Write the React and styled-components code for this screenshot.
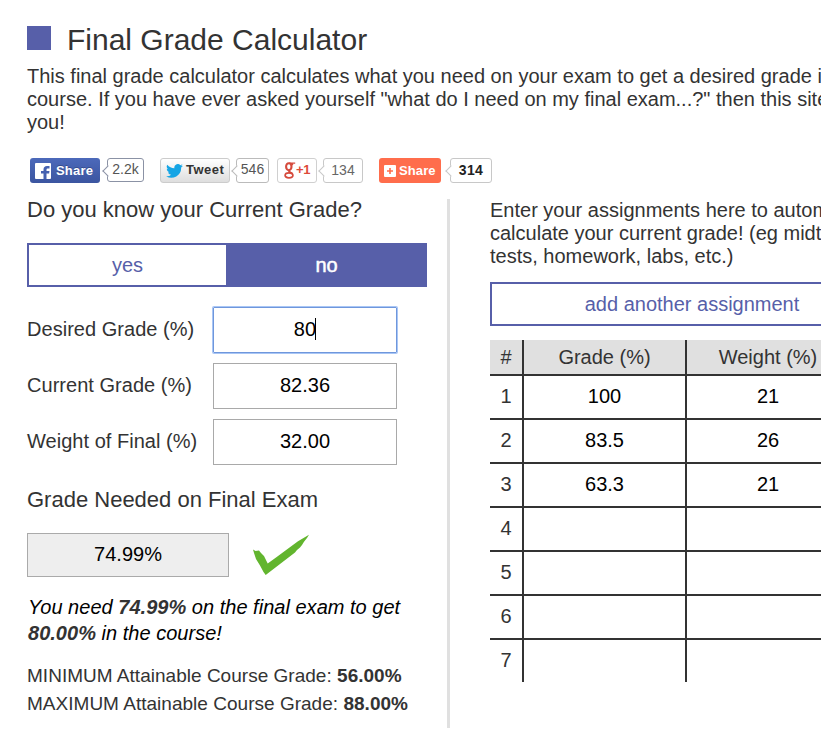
import React from "react";
import styled, { createGlobalStyle, css } from "styled-components";

const Global = createGlobalStyle`
  * { box-sizing: border-box; }
  body {
    margin: 0;
    background: #fff;
    color: #333;
    font: 20px/23px "Liberation Sans", Arial, sans-serif;
    overflow: hidden;
  }
`;

const Page = styled.main`
  height: 735px;
  overflow: hidden;
  padding: 23px 0 0 27px;
`;
const Inner = styled.div`
  width: 870px;
`;
const TitleRow = styled.header`
  display: flex;
  gap: 16px;
  height: 42px;
  padding-top: 3px;
`;
const Square = styled.span`
  width: 24px;
  height: 24px;
  background: #575fa9;
`;
const Title = styled.h1`
  margin: -3px 0 0;
  font-size: 30px;
  line-height: 34px;
  font-weight: 400;
`;
const Intro = styled.p`
  margin: 0 0 24px;
  height: 69px;
  white-space: pre-line;
`;
const Social = styled.div`
  display: flex;
  height: 25px;
  padding-left: 3px;
`;
const ShareGroup = styled.div`
  display: flex;
  gap: ${(p) => p.$gap}px;
  margin-right: ${(p) => p.$after}px;
`;
const kinds = {
  facebook: css`
    width: 70px;
    gap: 4px;
    padding-left: 4px;
    color: #fff;
    background: linear-gradient(#4c69ba, #3b55a0);
    font-size: 13px;
    letter-spacing: 0.2px;
    text-shadow: 0 -1px 0 #354c8c;
  `,
  twitter: css`
    width: 70px;
    gap: 3px;
    padding: 0 0 2px 5px;
    color: #333;
    border: 1px solid #ccc;
    background: linear-gradient(#fff, #dedede);
    font-size: 13px;
    letter-spacing: 0.5px;
    svg { margin-top: 3px; }
  `,
  google: css`
    width: 40px;
    gap: 0;
    padding: 0 0 2px 6px;
    color: #dd4b39;
    border: 1px solid #d0d0d0;
    background: #fff;
    font-size: 13px;
    letter-spacing: -0.4px;
    svg { margin-top: 2px; }
  `,
  addthis: css`
    width: 62px;
    gap: 3px;
    padding-left: 5px;
    color: #fff;
    background: #ff6d4c;
    font-size: 13px;
    letter-spacing: 0.1px;
  `,
};
const ShareButton = styled.button`
  display: flex;
  align-items: center;
  height: 25px;
  padding: 0;
  border: 0;
  border-radius: 3px;
  font-family: inherit;
  font-weight: 700;
  white-space: nowrap;
  ${(p) => kinds[p.$kind]}
`;
const Count = styled.span`
  position: relative;
  width: ${(p) => p.$width}px;
  height: ${(p) => p.$height || 25}px;
  border: 1px solid ${(p) => p.$line || "#c8c8c8"};
  border-radius: 3px;
  background: #fff;
  color: ${(p) => p.$ink || "#555"};
  font-size: 14px;
  line-height: ${(p) => p.$leading || 23}px;
  font-weight: ${(p) => (p.$strong ? 700 : 400)};
  letter-spacing: ${(p) => p.$track || 0}px;
  text-align: center;
  &::before {
    content: "";
    position: absolute;
    left: -4px;
    top: 8px;
    width: 7px;
    height: 7px;
    border: solid ${(p) => p.$line || "#c8c8c8"};
    border-width: 0 0 1px 1px;
    background: #fff;
    transform: rotate(45deg);
  }
`;
const Columns = styled.div`
  display: grid;
  grid-template-columns: 400px 3px 404px;
  column-gap: 20px;
  padding-top: 14px;
`;
const Left = styled.section`
  display: flex;
  flex-direction: column;
`;
const Right = styled.section`
  margin-left: 20px;
  width: 404px;
  padding-top: 2px;
`;
const Divider = styled.div`
  height: 529px;
  margin-top: 2px;
  background: #e0e0e0;
`;
const Question = styled.h2`
  margin: 0 0 21px;
  font-size: 22px;
  line-height: 25px;
  font-weight: 400;
`;
const Toggle = styled.div`
  display: grid;
  grid-template-columns: 197px 1fr;
  height: 44px;
  margin-bottom: 20px;
  border: 2px solid #575fa9;
`;
const Option = styled.button`
  border: 0;
  padding: 1px 0 0 ${(p) => (p.$on ? 2 : 0)}px;
  font: inherit;
  -webkit-text-stroke: ${(p) => (p.$on ? "0.5px #fff" : "0")};
  color: ${(p) => (p.$on ? "#fff" : "#575fa9")};
  background: ${(p) => (p.$on ? "#575fa9" : "#fff")};
`;
const Fields = styled.div`
  display: grid;
  row-gap: 10px;
  margin-bottom: 22px;
`;
const Field = styled.div`
  display: grid;
  grid-template-columns: 186px 184px;
  height: 46px;
  line-height: 45px;
  letter-spacing: 0.03px;
`;
const Value = styled.div`
  display: flex;
  align-items: center;
  justify-content: center;
  height: 46px;
  padding-bottom: 2px;
  line-height: 24px;
  color: #000;
  border: 1px solid ${(p) => (p.$focused ? "#6f97dc" : "#a9a9a9")};
  box-shadow: ${(p) => (p.$focused ? "0 0 0 1px #a9c6f5" : "none")};
  border-radius: ${(p) => (p.$focused ? 1 : 0)}px;
`;
const Caret = styled.i`
  width: 1px;
  height: 22px;
  margin: 0 0 0 -1px;
  background: #000;
`;
const ResultRow = styled.div`
  display: flex;
  gap: 23px;
  height: 44px;
`;
const Result = styled.output`
  width: 202px;
  border: 1px solid #aaa;
  background: #eee;
  color: #000;
  line-height: 40px;
  text-align: center;
`;
const Message = styled.p`
  margin: 17px 0 16px 1px;
  color: #000;
  font-style: italic;
  line-height: 26px;
  white-space: pre-line;
  letter-spacing: 0.02px;
  strong { color: #333; }
`;
const Bounds = styled.p`
  margin: 0;
  font-size: 19px;
  line-height: 28px;
  letter-spacing: 0.02px;
`;
const Help = styled.p`
  margin: 0 0 14px;
  white-space: pre-line;
`;
const AddButton = styled.button`
  display: block;
  width: 404px;
  height: 44px;
  padding: 1px 0 0;
  border: 2px solid #575fa9;
  background: #fff;
  color: #575fa9;
  font: inherit;
  margin-bottom: 14px;
`;
const Table = styled.div`
  width: 404px;
`;
const Row = styled.div`
  display: grid;
  grid-template-columns: 34px 163px 1fr;
  height: ${(p) => (p.$head ? 36 : 44)}px;
  line-height: ${(p) => (p.$head ? 34 : 40)}px;
  background: ${(p) => (p.$head ? "#e0e0e0" : "#fff")};
  border-bottom: 2px solid #333;
  text-align: center;
  &:last-child { height: 42px; border-bottom: 0; }
`;
const Cell = styled.div`
  position: relative;
  color: ${(p) => (p.$entry ? "#000" : "#333")};
  border-right: 2px solid #333;
  margin-bottom: -2px;
  &:last-child { border-right: 0; width: 162px; }
  ${Row}:last-child & { margin-bottom: 0; }
`;

const fields = [
  ["Desired Grade (%)", "80", true],
  ["Current Grade (%)", "82.36"],
  ["Weight of Final (%)", "32.00"],
];
const rows = [
  ["100", "21"],
  ["83.5", "26"],
  ["63.3", "21"],
  ["", ""],
  ["", ""],
  ["", ""],
  ["", ""],
];

const FacebookIcon = () => (
  <svg width="18" height="18" viewBox="0 0 18 18">
    <rect x="1" y="1" width="16" height="16" rx="1" fill="#fff" />
    <path d="M9.500 17v-5.500H7V9h2.500V7.500C9.500 5.200 10.800 4 13 4h2.500v2.500H14c-1 0-1.500.4-1.500 1.300V9h3l-.4 2.500h-2.600V17z" fill="#4561b0" />
  </svg>
);
const TwitterIcon = () => (
  <svg width="17" height="14" viewBox="0 0 24 20">
    <path fill="#16a5e5" d="M24 2.400c-.9.400-1.800.7-2.800.8 1-.6 1.800-1.600 2.200-2.700-1 .6-2 1-3.100 1.200A4.920 4.920 0 0 0 11.900 6.200C7.800 6 4.200 4 1.700 1a4.900 4.900 0 0 0 1.500 6.500c-.8 0-1.600-.2-2.200-.6 0 2.400 1.600 4.400 3.900 4.900-.7.200-1.500.2-2.200.1.600 2 2.400 3.400 4.600 3.400A9.900 9.900 0 0 1 0 17.400 14 14 0 0 0 21.500 4.900c1-.7 1.800-1.600 2.500-2.500z" />
  </svg>
);
const GoogleIcon = () => (
  <svg width="12" height="19" viewBox="0 0 12 19" fill="none" stroke="#d54a3c">
    <ellipse cx="4.800" cy="5.700" rx="2.700" ry="3.500" strokeWidth="2.100" />
    <path d="M5 2.200h6.200M7.500 2.500L9 4" strokeWidth="1.300" />
    <path d="M6 9.300C3.800 10.800 6 11.300 8.200 12.600" strokeWidth="2" />
    <ellipse cx="5" cy="14.300" rx="3.900" ry="2.500" strokeWidth="1.700" />
  </svg>
);
const PlusIcon = () => (
  <svg width="12" height="12" viewBox="0 0 12 12">
    <rect width="12" height="12" rx="1" fill="#fff" />
    <path d="M6 3v6M3 6h6" stroke="#ff6d4c" strokeWidth="1.600" />
  </svg>
);
const CheckIcon = () => (
  <svg width="58" height="44" viewBox="0 0 58 44">
    <path d="M1 16.500L3.500 18L7 17.500L9 20L12 23L15.700 30.500L24 24.500L46 8.200L57 1.800L55 5L52 8.700L50 12L48 14.500L45 17L43 19.500L15 41L13.700 42L11.500 39L8 32.500L4 26L2 20z" fill="#62b52e" />
  </svg>
);

export default function App() {
  return (
    <Page>
      <Global />
      <Inner>
        <TitleRow>
          <Square />
          <Title>Final Grade Calculator</Title>
        </TitleRow>
        <Intro>
          {'This final grade calculator calculates what you need on your exam to get a desired grade in the\ncourse. If you have ever asked yourself "what do I need on my final exam...?" then this site is for\nyou!'}
        </Intro>
        <Social>
          <ShareGroup $gap={7} $after={16}>
            <ShareButton $kind="facebook"><FacebookIcon />Share</ShareButton>
            <Count $width={37} $height={24} $leading={21} $line="#8b92a5">2.2k</Count>
          </ShareGroup>
          <ShareGroup $gap={6} $after={8}>
            <ShareButton $kind="twitter"><TwitterIcon />Tweet</ShareButton>
            <Count $width={33} $leading={21} $line="#bbb">546</Count>
          </ShareGroup>
          <ShareGroup $gap={6} $after={16}>
            <ShareButton $kind="google"><GoogleIcon />+1</ShareButton>
            <Count $width={40} $ink="#666">134</Count>
          </ShareGroup>
          <ShareGroup $gap={9} $after={0}>
            <ShareButton $kind="addthis"><PlusIcon />Share</ShareButton>
            <Count $width={42} $strong $ink="#222" $track={0.3}>314</Count>
          </ShareGroup>
        </Social>
        <Columns>
          <Left>
            <Question>Do you know your Current Grade?</Question>
            <Toggle>
              <Option>yes</Option>
              <Option $on>no</Option>
            </Toggle>
            <Fields>
              {fields.map(([label, value, focused]) => (
                <Field key={label}>
                  <span>{label}</span>
                  <Value $focused={focused}>{value}{focused && <Caret />}</Value>
                </Field>
              ))}
            </Fields>
            <Question>Grade Needed on Final Exam</Question>
            <ResultRow>
              <Result>74.99%</Result>
              <CheckIcon />
            </ResultRow>
            <Message>
              You need <strong>74.99%</strong> on the final exam to get{"\n"}
              <strong>80.00%</strong> in the course!
            </Message>
            <Bounds>MINIMUM Attainable Course Grade: <strong>56.00%</strong></Bounds>
            <Bounds>MAXIMUM Attainable Course Grade: <strong>88.00%</strong></Bounds>
          </Left>
          <Divider />
          <Right>
            <Help>{"Enter your assignments here to automatically\ncalculate your current grade! (eg midterms,\ntests, homework, labs, etc.)"}</Help>
            <AddButton>add another assignment</AddButton>
            <Table>
              <Row $head>
                <Cell>#</Cell>
                <Cell>Grade (%)</Cell>
                <Cell>Weight (%)</Cell>
              </Row>
              {rows.map(([grade, weight], i) => (
                <Row key={i}>
                  <Cell>{i + 1}</Cell>
                  <Cell $entry>{grade}</Cell>
                  <Cell $entry>{weight}</Cell>
                </Row>
              ))}
            </Table>
          </Right>
        </Columns>
      </Inner>
    </Page>
  );
}
